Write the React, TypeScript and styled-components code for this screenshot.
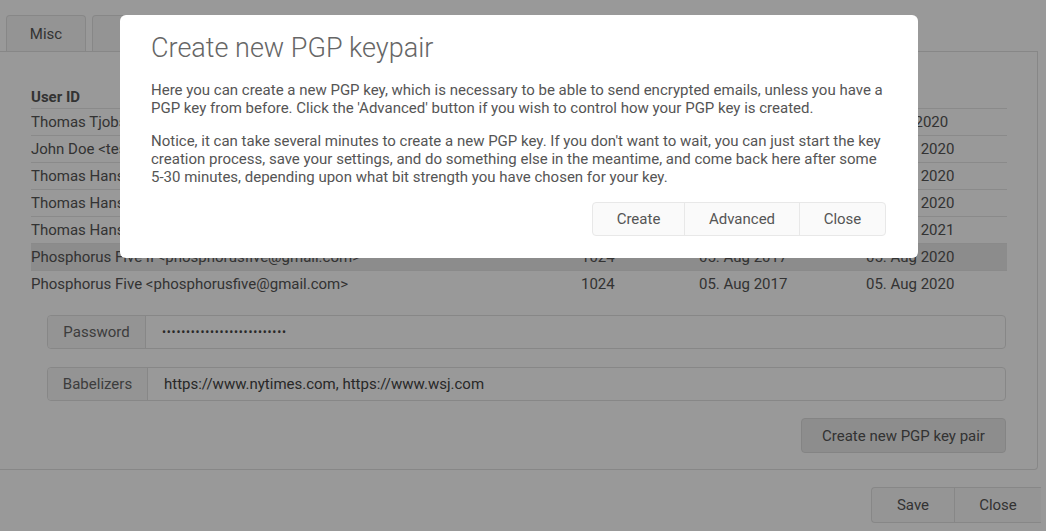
import React from "react";
import styled, { createGlobalStyle } from "styled-components";

const GlobalStyle = createGlobalStyle`
    html, body {
        margin: 0;
        padding: 0;
        background: #ffffff;
        font-family: Roboto, "Noto Sans", sans-serif;
        color: #555;
    }
`;

interface KeyRow {
    id: string
    strength: string
    created: string
    expires: string
    selected?: boolean
}

const keys: KeyRow[] = [
    { id: "Thomas Tjobsen <thomas@gaiasoul.com>", strength: "4096", created: "12. Jul 2017", expires: "12. Jul 2020" },
    { id: "John Doe <test@example.com>", strength: "2048", created: "01. Aug 2017", expires: "01. Aug 2020" },
    { id: "Thomas Hansen <thomas@gaiasoul.com>", strength: "4096", created: "02. Aug 2017", expires: "02. Aug 2020" },
    { id: "Thomas Hansen <thomas@gaiasoul.com>", strength: "4096", created: "03. Aug 2017", expires: "03. Aug 2020" },
    { id: "Thomas Hansen <thomas@gaiasoul.com>", strength: "4096", created: "04. Aug 2018", expires: "04. Aug 2021" },
    { id: "Phosphorus Five II <phosphorusfive@gmail.com>", strength: "1024", created: "05. Aug 2017", expires: "05. Aug 2020", selected: true },
    { id: "Phosphorus Five <phosphorusfive@gmail.com>", strength: "1024", created: "05. Aug 2017", expires: "05. Aug 2020" },
];

function App() {
    return (
        <>
            <GlobalStyle />
            <StyledPage>
                <StyledTabs>
                    <StyledTab $width={80}>Misc</StyledTab>
                    <StyledTab $width={120}>SMTP</StyledTab>
                    <StyledTab $width={110}>POP3</StyledTab>
                </StyledTabs>
                <StyledPanel>
                    <StyledTable>
                        <thead>
                            <tr>
                                <StyledHeadCell>User ID</StyledHeadCell>
                                <StyledHeadCell>Strength</StyledHeadCell>
                                <StyledHeadCell>Created</StyledHeadCell>
                                <StyledHeadCell>Expires</StyledHeadCell>
                            </tr>
                        </thead>
                        <tbody>
                            {keys.map((k, i) => (
                                <StyledRow key={i} $selected={k.selected}>
                                    <StyledCell>{k.id}</StyledCell>
                                    <StyledCell>{k.strength}</StyledCell>
                                    <StyledCell>{k.created}</StyledCell>
                                    <StyledCell>{k.expires}</StyledCell>
                                </StyledRow>
                            ))}
                        </tbody>
                    </StyledTable>
                    <StyledFields>
                        <StyledInputGroup>
                            <StyledAddon $width={98}>Password</StyledAddon>
                            <StyledInput $dots>••••••••••••••••••••••••••</StyledInput>
                        </StyledInputGroup>
                        <StyledInputGroup>
                            <StyledAddon $width={100}>Babelizers</StyledAddon>
                            <StyledInput>https://www.nytimes.com, https://www.wsj.com</StyledInput>
                        </StyledInputGroup>
                    </StyledFields>
                    <StyledPanelFooter>
                        <StyledButton>Create new PGP key pair</StyledButton>
                    </StyledPanelFooter>
                </StyledPanel>
                <StyledBottomBar>
                    <StyledButtonGroup>
                        <StyledGroupButton $width={82}>Save</StyledGroupButton>
                        <StyledGroupButton $width={86}>Close</StyledGroupButton>
                    </StyledButtonGroup>
                </StyledBottomBar>
            </StyledPage>

            <StyledOverlay>
                <StyledModal>
                    <StyledTitle>Create new PGP keypair</StyledTitle>
                    <StyledText>
                        Here you can create a new PGP key, which is necessary to be able to send encrypted emails, unless you have a PGP key from before. Click the 'Advanced' button if you wish to control how your PGP key is created.
                    </StyledText>
                    <StyledText>
                        Notice, it can take several minutes to create a new PGP key. If you don't want to wait, you can just start the key creation process, save your settings, and do something else in the meantime, and come back here after some 5-30 minutes, depending upon what bit strength you have chosen for your key.
                    </StyledText>
                    <StyledModalFooter>
                        <StyledModalButtons>
                            <StyledModalButton $width={91}>Create</StyledModalButton>
                            <StyledModalButton $width={114}>Advanced</StyledModalButton>
                            <StyledModalButton $width={85}>Close</StyledModalButton>
                        </StyledModalButtons>
                    </StyledModalFooter>
                </StyledModal>
            </StyledOverlay>
        </>
    )
}

const StyledPage = styled.div`
    width: 1046px;
    height: 531px;
    overflow: hidden;
    font-size: 15px;
`;

const StyledTabs = styled.div`
    display: flex;
    gap: 6px;
    padding: 15px 0 0 6px;
`;

const StyledTab = styled.div<{ $width: number }>`
    height: 36px;
    width: ${({ $width }) => $width}px;
    box-sizing: border-box;
    display: flex;
    align-items: center;
    justify-content: center;
    border: 1px solid #e2e2e2;
    border-bottom: none;
    border-radius: 4px 4px 0 0;
    background: #f7f7f7;
    font-size: 15px;
    color: #555;
`;

const StyledPanel = styled.div`
    width: 1038px;
    height: 419px;
    box-sizing: border-box;
    border: 1px solid #e2e2e2;
    border-left: none;
    border-radius: 0 0 4px 0;
    padding: 34px 32px 0 31px;
    display: flex;
    flex-direction: column;
`;

const StyledTable = styled.table`
    width: 976px;
    border-collapse: collapse;
    table-layout: fixed;

    th:nth-child(1) { width: 550px; }
    th:nth-child(2) { width: 118px; }
    th:nth-child(3) { width: 167px; }
`;

const StyledHeadCell = styled.th`
    text-align: left;
    font-weight: bold;
    font-size: 15px;
    color: #555;
    height: 22px;
    padding: 0;
    vertical-align: middle;
`;

const StyledRow = styled.tr<{ $selected?: boolean }>`
    background: ${({ $selected }) => ($selected ? "#e9e9e9" : "transparent")};
    border-top: 1px solid #e6e6e6;
`;

const StyledCell = styled.td`
    height: 26px;
    padding: 0;
    font-size: 15px;
    color: #555;
    white-space: nowrap;
    overflow: hidden;
    vertical-align: middle;
`;

const StyledFields = styled.div`
    display: flex;
    flex-direction: column;
    gap: 18px;
    margin: 18px 0 0 16px;
    width: 959px;
`;

const StyledInputGroup = styled.div`
    display: flex;
    height: 34px;
    box-sizing: border-box;
    border: 1px solid #e2e2e2;
    border-radius: 4px;
`;

const StyledAddon = styled.div<{ $width: number }>`
    width: ${({ $width }) => $width}px;
    box-sizing: border-box;
    display: flex;
    align-items: center;
    justify-content: center;
    background: #f7f7f7;
    border-right: 1px solid #e2e2e2;
    border-radius: 4px 0 0 4px;
    color: #666;
    font-size: 15px;
`;

const StyledInput = styled.div<{ $dots?: boolean }>`
    flex: 1;
    display: flex;
    align-items: center;
    padding-left: 16px;
    font-size: ${({ $dots }) => ($dots ? "12px" : "15px")};
    letter-spacing: ${({ $dots }) => ($dots ? "0.75px" : "0")};
    color: #444;
`;

const StyledPanelFooter = styled.div`
    display: flex;
    justify-content: flex-end;
    width: 975px;
    margin-top: 17px;
`;

const StyledButton = styled.div`
    width: 205px;
    height: 35px;
    box-sizing: border-box;
    display: flex;
    align-items: center;
    justify-content: center;
    border: 1px solid #dcdcdc;
    border-radius: 4px;
    background: #ececec;
    color: #555;
    font-size: 15px;
`;

const StyledBottomBar = styled.div`
    display: flex;
    justify-content: flex-end;
    width: 1041px;
    padding-top: 17px;
`;

const StyledButtonGroup = styled.div`
    display: flex;
    height: 36px;
    box-sizing: border-box;
    border: 1px solid #e2e2e2;
    border-right: none;
    border-radius: 4px 0 0 4px;
    background: #f9f9f9;
`;

const StyledGroupButton = styled.div<{ $width: number }>`
    width: ${({ $width }) => $width}px;
    display: flex;
    align-items: center;
    justify-content: center;
    color: #555;
    font-size: 15px;

    & + & {
        border-left: 1px solid #e2e2e2;
    }
`;

const StyledOverlay = styled.div`
    position: fixed;
    inset: 0;
    background: rgba(0, 0, 0, 0.4);
    padding: 15px 0 0 120px;
`;

const StyledModal = styled.div`
    width: 798px;
    height: 243px;
    box-sizing: border-box;
    background: #ffffff;
    border-radius: 6px;
    padding: 16px 32px 0 31px;
`;

const StyledTitle = styled.h2`
    margin: 0 0 16px 0;
    font-size: 27px;
    line-height: 34px;
    font-weight: 300;
    color: #666;
`;

const StyledText = styled.p`
    margin: 0 0 15px 0;
    font-size: 15px;
    line-height: 18px;
    color: #555;
`;

const StyledModalFooter = styled.div`
    display: flex;
    justify-content: flex-end;
    margin-top: 16px;
`;

const StyledModalButtons = styled.div`
    display: flex;
    height: 34px;
    box-sizing: border-box;
    border: 1px solid #e8e8e8;
    border-radius: 4px;
    background: #fafafa;
`;

const StyledModalButton = styled.div<{ $width: number }>`
    width: ${({ $width }) => $width}px;
    display: flex;
    align-items: center;
    justify-content: center;
    color: #555;
    font-size: 15px;

    & + & {
        border-left: 1px solid #e8e8e8;
    }
`;

export default App;
